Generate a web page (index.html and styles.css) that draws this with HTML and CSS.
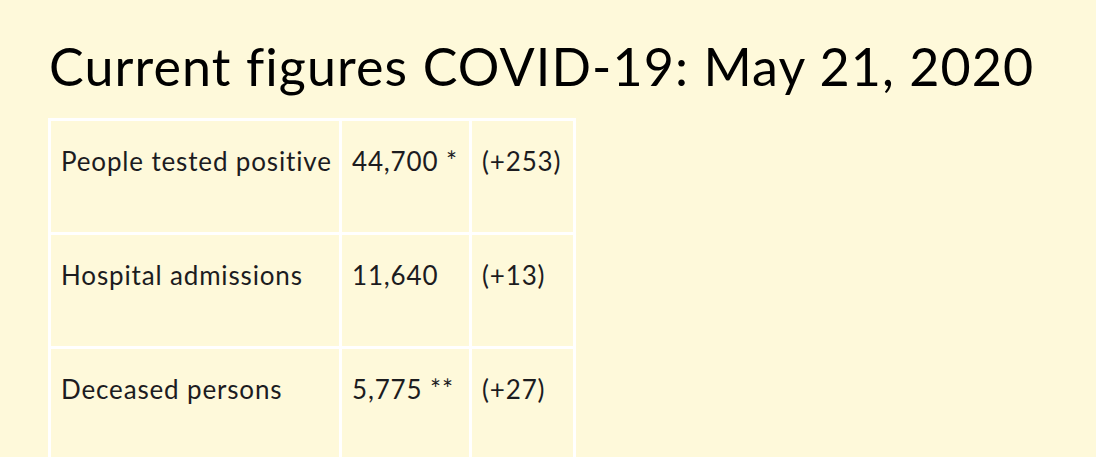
FILE: index.html
```html
<!DOCTYPE html>
<html lang="en">
<head>
<meta charset="utf-8">
<title>Current figures COVID-19</title>
<link rel="stylesheet" href="styles.css">
</head>
<body>
<main class="page">
  <h1 class="title">Current figures COVID-19: May 21, 2020</h1>
  <table class="figures">
    <colgroup>
      <col class="col-label">
      <col class="col-total">
      <col class="col-change">
    </colgroup>
    <tbody>
      <tr>
        <td>People tested positive</td>
        <td>44,700 *</td>
        <td>(+253)</td>
      </tr>
      <tr>
        <td>Hospital admissions</td>
        <td>11,640</td>
        <td>(+13)</td>
      </tr>
      <tr>
        <td>Deceased persons</td>
        <td>5,775 **</td>
        <td>(+27)</td>
      </tr>
    </tbody>
  </table>
</main>
</body>
</html>
```

FILE: styles.css
```css
html, body {
  margin: 0;
  padding: 0;
  background: #fef9da;
}

.page {
  padding: 0 0 0 48px;
  font-family: Lato, "Noto Sans", sans-serif;
}

.title {
  margin: 0;
  padding: 34px 0 0 1px;
  height: 84px;
  font-size: 52px;
  font-weight: 400;
  line-height: 64px;
  letter-spacing: 1.1px;
  color: #000;
  white-space: nowrap;
}

.figures {
  border-collapse: collapse;
  border: 3px solid #fff;
  font-size: 26px;
  letter-spacing: 0.85px;
  color: #1c1c1f;
  table-layout: fixed;
  width: 528px;
}

.col-label { width: 291px; }
.col-total { width: 130px; }
.col-change { width: 104px; }

.figures td {
  border: 3px solid #fff;
  padding: 25px 8px 0 10px;
  height: 86px;
  vertical-align: top;
  white-space: nowrap;
  line-height: 30px;
}
```
